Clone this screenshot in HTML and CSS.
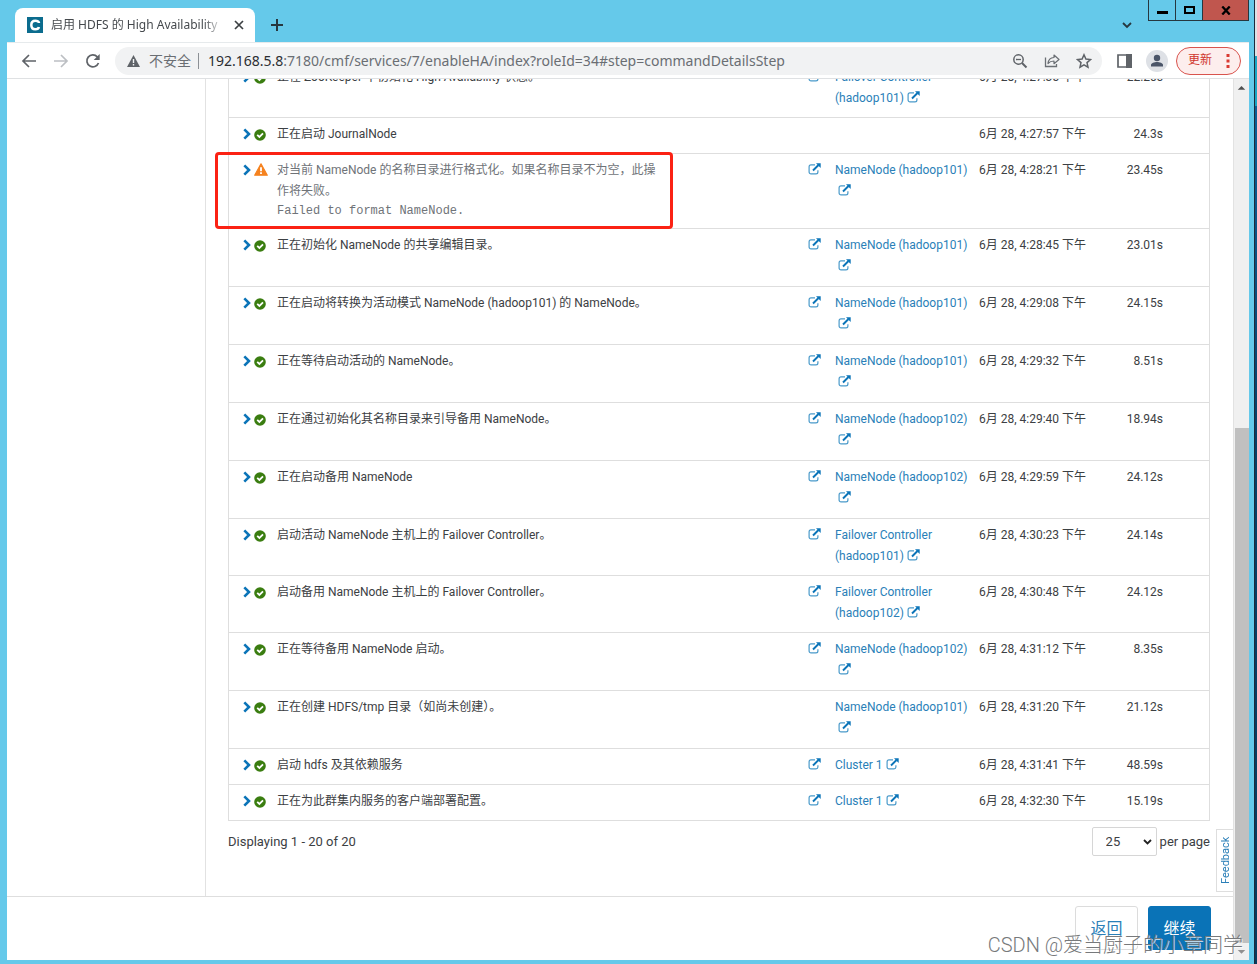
FILE: index.html
```html
<!DOCTYPE html>
<html lang="zh-CN">
<head>
<meta charset="utf-8">
<title>启用 HDFS 的 High Availability</title>
<link rel="stylesheet" href="styles.css">
</head>
<body>
<svg class="defs" aria-hidden="true">
  <symbol id="chev" viewBox="0 0 8 12"><path d="M1.3 1.3 6 6l-4.7 4.7" fill="none" stroke="#0b74b8" stroke-width="2.6"/></symbol>
  <symbol id="ok" viewBox="0 0 12 12"><circle cx="6" cy="6" r="5.8" fill="#3a7d10"/><path d="M3.2 5.9 5.4 8 9 4.4" fill="none" stroke="#fff" stroke-width="1.8"/></symbol>
  <symbol id="warn" viewBox="0 0 14 13"><path d="M7 .8 13.3 12.2H.7Z" fill="#f5821f" stroke="#f5821f" stroke-width="1.2" stroke-linejoin="round"/><path d="M7 4.2v4M7 9.3v1.8" stroke="#fff" stroke-width="1.8"/></symbol>
  <symbol id="ext" viewBox="0 0 13 12"><path d="M7 1.9H3A1.9 1.9 0 0 0 1.100 3.800V9A1.900 1.900 0 0 0 3 10.900H8A1.900 1.900 0 0 0 9.900 9V7.200" fill="none" stroke="#4a9aca" stroke-width="1.200"/><path d="M5 7.500 10.500 2" stroke="#0b74b8" stroke-width="1.900"/><path d="M8 .3h4.700V5Z" fill="#0b74b8"/></symbol>
</svg>
<div class="desktop">
<div class="window">
  <header class="tabbar">
    <div class="tab">
      <svg class="favicon" viewBox="0 0 16 16"><path fill="#0b6c8e" d="M0 0h16v16H0z"/><path d="M11.900 6.100V5.500C11.500 4.200 10 3.700 8.300 3.700 5.700 3.700 4.300 5.300 4.300 8s1.400 4.300 4 4.300c1.900 0 3.300-.7 3.600-2.300" fill="none" stroke="#fff" stroke-width="2.500"/></svg>
      <span class="tab-title">启用 HDFS 的 High Availability</span>
      <button class="plain" aria-label="关闭标签页"><svg width="10" height="10" viewBox="0 0 10 10"><path d="m1 1 8 8M9 1 1 9" stroke="#3c4043" stroke-width="1.700"/></svg></button>
    </div>
    <button class="plain newtab" aria-label="新标签页"><svg width="12" height="12" viewBox="0 0 12 12"><path d="M6 0v12M0 6h12" stroke="#26373f" stroke-width="2"/></svg></button>
    <button class="plain tabsearch" aria-label="搜索标签页"><svg width="10" height="7" viewBox="0 0 10 7"><path d="m1 1 4 4 4-4" fill="none" stroke="#26373f" stroke-width="1.800"/></svg></button>
    <div class="winctl">
      <button aria-label="最小化"><svg width="11" height="9" viewBox="0 0 11 9"><path d="M0 5h11v3H0z"/></svg></button>
      <button aria-label="最大化"><svg width="11" height="9" viewBox="0 0 11 9"><path d="M1 1h9v6H1z" fill="none" stroke="#000" stroke-width="2"/></svg></button>
      <button class="close" aria-label="关闭"><svg width="10" height="9" viewBox="0 0 10 9"><path d="m1.300 .5 7.400 8M8.700 .5l-7.400 8" stroke="#000" stroke-width="2.300"/></svg></button>
    </div>
  </header>
  <nav class="toolbar">
    <button class="plain" aria-label="后退"><svg width="16" height="16" viewBox="0 0 16 16"><path d="M15 8H2.500M8 2 2 8l6 6" fill="none" stroke="#5f6368" stroke-width="1.700"/></svg></button>
    <button class="plain" aria-label="前进"><svg width="16" height="16" viewBox="0 0 16 16"><path d="M1 8h12.500M8 2l6 6-6 6" fill="none" stroke="#bcbfc3" stroke-width="1.700"/></svg></button>
    <button class="plain" aria-label="重新加载"><svg width="16" height="16" viewBox="0 0 16 16"><path d="M13.500 10A6 6 0 1 1 12.300 3.800L13.500 5" fill="none" stroke="#5f6368" stroke-width="1.700"/><path d="M14.700 1v6h-6Z" fill="#5f6368"/></svg></button>
    <div class="address">
      <svg width="13" height="12" viewBox="0 0 13 12"><path d="M6.500 0 13 12H0Z" fill="#5f6368"/><path d="M6.500 4v4M6.500 9v1.500" stroke="#f1f3f4" stroke-width="1.400"/></svg>
      <span class="insecure">不安全</span><span class="bar"></span>
      <span class="url"><b>192.168.5.8</b>:7180/cmf/services/7/enableHA/index?roleId=34#step=commandDetailsStep</span>
      <button class="plain" aria-label="缩放"><svg width="16" height="16" viewBox="0 0 16 16"><circle cx="6.500" cy="6.500" r="4.700" fill="none" stroke="#5f6368" stroke-width="1.500"/><path d="M4 6.500h5" stroke="#5f6368" stroke-width="1.300"/><path d="m10 10 4.500 4.500" stroke="#5f6368" stroke-width="2"/></svg></button>
      <button class="plain" aria-label="分享"><svg width="16" height="16" viewBox="0 0 16 16"><path d="M1.500 4.500v9h11V11" fill="none" stroke="#6b6f74" stroke-width="1.300"/><path d="M4 10.500C4.300 7 6 4.700 10 4.500V2l5 4.500-5 4.200V8C7.500 8 5.500 8.700 4 10.500Z" fill="none" stroke="#6b6f74" stroke-width="1.200" stroke-linejoin="round"/></svg></button>
      <button class="plain" aria-label="收藏"><svg width="16" height="16" viewBox="0 0 16 16"><path d="m8 1.800 1.900 4.300 4.600.4-3.500 3.100 1 4.600L8 11.800l-4 2.400 1-4.600L1.500 6.500l4.600-.4Z" fill="none" stroke="#5f6368" stroke-width="1.500"/></svg></button>
    </div>
    <button class="plain panel" aria-label="侧边栏"><svg width="15" height="14" viewBox="0 0 15 14"><path d="M1 1h13v12H1z" fill="none" stroke="#5f6368" stroke-width="1.700"/><path d="M9 0h6v14H9z" fill="#5f6368"/></svg></button>
    <button class="plain" aria-label="用户"><svg width="22" height="22" viewBox="0 0 22 22"><circle cx="11" cy="11" r="11" fill="#dee1e6"/><circle cx="11" cy="8" r="3.200" fill="#4a5568"/><path d="M5 16.500V15c0-2 3.500-3 6-3s6 1 6 3v1.500Z" fill="#4a5568"/></svg></button>
    <button class="update">更新<svg width="4" height="14" viewBox="0 0 4 14"><path d="M.5 0h3v3h-3zM.5 5.500h3v3h-3zM.5 11h3v3h-3z" fill="#d93a32"/></svg></button>
  </nav>
  <div class="page">
    <div class="app">
      <div class="main">
        <aside class="sidebar"></aside>
        <main class="content">
          <table class="steps">
            <colgroup><col class="c-state"><col><col class="c-ext"><col class="c-ctx"><col class="c-time"><col class="c-dur"></colgroup>
            <tbody>
            <tr><td><svg class="chev"><use href="#chev"/></svg><svg class="ok"><use href="#ok"/></svg></td><td>正在 ZooKeeper 中初始化 High Availability 状态。</td><td><a href="#"><svg class="ext"><use href="#ext"/></svg></a></td><td><a href="#">Failover Controller (hadoop101)<svg class="ext after"><use href="#ext"/></svg></a></td><td>6月 28, 4:27:35 下午</td><td>22.20s</td></tr>
            <tr><td><svg class="chev"><use href="#chev"/></svg><svg class="ok"><use href="#ok"/></svg></td><td>正在启动 JournalNode</td><td></td><td></td><td>6月 28, 4:27:57 下午</td><td>24.3s</td></tr>
            <tr class="failed"><td><div class="callout"></div><svg class="chev"><use href="#chev"/></svg><svg class="warn"><use href="#warn"/></svg></td><td><div class="message">对当前 NameNode 的名称目录进行格式化。如果名称目录不为空，此操作将失败。</div><div class="error">Failed to format NameNode.</div></td><td><a href="#"><svg class="ext"><use href="#ext"/></svg></a></td><td><a href="#">NameNode (hadoop101)<svg class="ext after"><use href="#ext"/></svg></a></td><td>6月 28, 4:28:21 下午</td><td>23.45s</td></tr>
            <tr class="node"><td><svg class="chev"><use href="#chev"/></svg><svg class="ok"><use href="#ok"/></svg></td><td>正在初始化 NameNode 的共享编辑目录。</td><td><a href="#"><svg class="ext"><use href="#ext"/></svg></a></td><td><a href="#">NameNode (hadoop101)<svg class="ext after"><use href="#ext"/></svg></a></td><td>6月 28, 4:28:45 下午</td><td>23.01s</td></tr>
            <tr class="node"><td><svg class="chev"><use href="#chev"/></svg><svg class="ok"><use href="#ok"/></svg></td><td>正在启动将转换为活动模式 NameNode (hadoop101) 的 NameNode。</td><td><a href="#"><svg class="ext"><use href="#ext"/></svg></a></td><td><a href="#">NameNode (hadoop101)<svg class="ext after"><use href="#ext"/></svg></a></td><td>6月 28, 4:29:08 下午</td><td>24.15s</td></tr>
            <tr class="node"><td><svg class="chev"><use href="#chev"/></svg><svg class="ok"><use href="#ok"/></svg></td><td>正在等待启动活动的 NameNode。</td><td><a href="#"><svg class="ext"><use href="#ext"/></svg></a></td><td><a href="#">NameNode (hadoop101)<svg class="ext after"><use href="#ext"/></svg></a></td><td>6月 28, 4:29:32 下午</td><td>8.51s</td></tr>
            <tr class="node"><td><svg class="chev"><use href="#chev"/></svg><svg class="ok"><use href="#ok"/></svg></td><td>正在通过初始化其名称目录来引导备用 NameNode。</td><td><a href="#"><svg class="ext"><use href="#ext"/></svg></a></td><td><a href="#">NameNode (hadoop102)<svg class="ext after"><use href="#ext"/></svg></a></td><td>6月 28, 4:29:40 下午</td><td>18.94s</td></tr>
            <tr class="node"><td><svg class="chev"><use href="#chev"/></svg><svg class="ok"><use href="#ok"/></svg></td><td>正在启动备用 NameNode</td><td><a href="#"><svg class="ext"><use href="#ext"/></svg></a></td><td><a href="#">NameNode (hadoop102)<svg class="ext after"><use href="#ext"/></svg></a></td><td>6月 28, 4:29:59 下午</td><td>24.12s</td></tr>
            <tr><td><svg class="chev"><use href="#chev"/></svg><svg class="ok"><use href="#ok"/></svg></td><td>启动活动 NameNode 主机上的 Failover Controller。</td><td><a href="#"><svg class="ext"><use href="#ext"/></svg></a></td><td><a href="#">Failover Controller (hadoop101)<svg class="ext after"><use href="#ext"/></svg></a></td><td>6月 28, 4:30:23 下午</td><td>24.14s</td></tr>
            <tr><td><svg class="chev"><use href="#chev"/></svg><svg class="ok"><use href="#ok"/></svg></td><td>启动备用 NameNode 主机上的 Failover Controller。</td><td><a href="#"><svg class="ext"><use href="#ext"/></svg></a></td><td><a href="#">Failover Controller (hadoop102)<svg class="ext after"><use href="#ext"/></svg></a></td><td>6月 28, 4:30:48 下午</td><td>24.12s</td></tr>
            <tr class="node"><td><svg class="chev"><use href="#chev"/></svg><svg class="ok"><use href="#ok"/></svg></td><td>正在等待备用 NameNode 启动。</td><td><a href="#"><svg class="ext"><use href="#ext"/></svg></a></td><td><a href="#">NameNode (hadoop102)<svg class="ext after"><use href="#ext"/></svg></a></td><td>6月 28, 4:31:12 下午</td><td>8.35s</td></tr>
            <tr class="node"><td><svg class="chev"><use href="#chev"/></svg><svg class="ok"><use href="#ok"/></svg></td><td>正在创建 HDFS/tmp 目录（如尚未创建）。</td><td></td><td><a href="#">NameNode (hadoop101)<svg class="ext after"><use href="#ext"/></svg></a></td><td>6月 28, 4:31:20 下午</td><td>21.12s</td></tr>
            <tr><td><svg class="chev"><use href="#chev"/></svg><svg class="ok"><use href="#ok"/></svg></td><td>启动 hdfs 及其依赖服务</td><td><a href="#"><svg class="ext"><use href="#ext"/></svg></a></td><td><a href="#">Cluster 1<svg class="ext after"><use href="#ext"/></svg></a></td><td>6月 28, 4:31:41 下午</td><td>48.59s</td></tr>
            <tr><td><svg class="chev"><use href="#chev"/></svg><svg class="ok"><use href="#ok"/></svg></td><td>正在为此群集内服务的客户端部署配置。</td><td><a href="#"><svg class="ext"><use href="#ext"/></svg></a></td><td><a href="#">Cluster 1<svg class="ext after"><use href="#ext"/></svg></a></td><td>6月 28, 4:32:30 下午</td><td>15.19s</td></tr>
            </tbody>
          </table>
          <div class="pager">
            <span>Displaying 1 - 20 of 20</span>
            <label><span class="select"><select><option>25</option><option>50</option></select><svg width="9" height="6" viewBox="0 0 9 6"><path d="m1 1 3.500 3.500L8 1" fill="none" stroke="#222" stroke-width="1.800"/></svg></span>per page</label>
          </div>
        </main>
        <a class="feedback" href="#">Feedback</a>
      </div>
      <footer class="actions">
        <button class="btn">返回</button>
        <button class="btn primary">继续</button>
      </footer>
    </div>
    <div class="scrollbar">
      <svg viewBox="0 0 16 17"><path d="m4 11 4-4 4 4Z" fill="#505050"/></svg>
      <div class="space"></div><div class="thumb"></div>
      <svg viewBox="0 0 16 17"><path d="m4 7 4 4 4-4Z" fill="#909090"/></svg>
    </div>
  </div>
</div>
<div class="behind"></div>
<div class="watermark">CSDN @爱当厨子的小章同学</div>
</div>
</body>
</html>
```
FILE: styles.css
```css
* { box-sizing: border-box; }
body { margin: 0; font: 12px/21px Roboto, "Noto Sans CJK SC", sans-serif; color: #3c4043; }
a { color: #2a7fb8; text-decoration: none; }
button { font: inherit; cursor: pointer; }
.defs { position: absolute; width: 0; height: 0; }
.plain { border: 0; padding: 0; background: none; display: flex; align-items: center; justify-content: center; }
.desktop { position: relative; display: flex; height: 100vh; overflow: hidden; }
.window { flex: 1; min-width: 0; display: flex; flex-direction: column; background: #65c9ea; padding: 0 5px 4px 7px; }
.behind { width: 3px; border-left: 1px solid #1c2a3c; background: linear-gradient(#dde3e6 56px, #1ba5c4 56px 106px, #0b5f96 106px, #063f66 45%, #073a5c); }

/* Browser chrome */
.tabbar { display: flex; height: 42px; padding-left: 8px; font: 12px/20px "Noto Sans", "Noto Sans CJK SC", sans-serif; }
.tab { display: flex; align-items: center; width: 240px; height: 34px; margin-top: 8px; padding: 0 11px 0 12px; background: #fff; border-radius: 8px 8px 0 0; }
.favicon { width: 16px; height: 16px; flex: none; }
.tab-title { flex: 1; margin: 0 10px 0 8px; overflow: hidden; white-space: nowrap; color: #45494d; -webkit-mask-image: linear-gradient(90deg, #000 88%, transparent); mask-image: linear-gradient(90deg, #000 88%, transparent); }
.newtab { margin: 8px 0 0 16px; }
.tabsearch { margin: 9px 16px 0 auto; }
.winctl { display: flex; height: 21px; border: 1px solid #26373f; border-top: 0; }
.winctl button { width: 27px; border: 0; border-right: 1px solid #26373f; background: none; padding: 0; display: flex; align-items: center; justify-content: center; }
.winctl .close { width: 45px; border-right: 0; background: #c0564e; }
.toolbar { display: flex; align-items: center; gap: 16px; height: 37px; padding: 0 8px 0 14px; background: #fff; border-top: 1px solid #e6eaec; border-bottom: 1px solid #dfe1e3; }
.address { flex: 1; min-width: 0; display: flex; align-items: center; height: 28px; margin-left: -2px; margin-right: -1px; padding: 0 10px 0 12px; border-radius: 14px; background: #f1f2f3; color: #6a6e73; font: 14px/20px "Noto Sans", "Noto Sans CJK SC", sans-serif; }
.insecure { margin: 0 7px 0 9px; white-space: nowrap; }
.bar { width: 1px; height: 16px; background: #8c9095; margin-right: 9px; }
.url { flex: 1; min-width: 0; overflow: hidden; white-space: nowrap; }
.url b { font-weight: 400; color: #2b2e32; }
.address .plain { margin-left: 16px; }
.address .url + .plain { margin-left: 8px; }
.panel { margin-right: -2px; }
.update { display: flex; align-items: center; gap: 14px; margin-left: -8px; height: 28px; padding: 0 10px 0 11px; border: 1px solid #d9534d; border-radius: 14px; background: #fdeeed; color: #d0362e; }

/* Page */
.page { flex: 1; min-height: 0; display: flex; background: #fff; }
.app { flex: 1; min-width: 0; display: flex; flex-direction: column; }
.main { position: relative; flex: 1; min-height: 0; display: flex; }
.sidebar { width: 199px; border-right: 1px solid #e2e2e2; }
.content { flex: 1; min-width: 0; display: flex; flex-direction: column; justify-content: flex-end; overflow: hidden; padding: 0 23px 40px 22px; }
.steps { flex: none; width: 100%; table-layout: fixed; border-collapse: separate; border-spacing: 0; border: 1px solid #dedede; border-width: 0 1px; }
.steps td { padding: 6px 0 8px; border-bottom: 1px solid #dedede; vertical-align: top; }
.steps td:first-child { position: relative; padding-left: 14px; }
.steps td:nth-child(4) { padding-right: 10px; }
.steps td:last-child { padding-right: 46px; text-align: right; }
.steps .node { height: 58px; }
.c-state { width: 48px; }
.c-ext { width: 27px; }
.c-ctx { width: 144px; }
.c-time { width: 120px; }
.c-dur { width: 110px; }
.chev { width: 8px; height: 12px; margin-right: 3px; vertical-align: -2px; }
.ok { width: 12px; height: 12px; vertical-align: -3px; }
.warn { width: 14px; height: 13px; vertical-align: -2px; }
.ext { width: 13px; height: 12px; vertical-align: -1px; }
.after { margin-left: 3px; }
.failed { color: #6f7378; }
.failed td:nth-child(n+5) { color: #3c4043; }
.message { max-width: 384px; }
.error { font: 12px/18px "Liberation Mono", monospace; }
.callout { position: absolute; top: -2px; left: -14px; width: 458px; height: 77px; border: 3px solid #fb2214; border-radius: 4px; }
.pager { flex: none; display: flex; justify-content: space-between; align-items: center; margin-top: 6px; height: 30px; font-size: 13px; }
.content .pager { margin-top: 5px; }
.pager label { display: flex; align-items: center; gap: 3px; }
.select { position: relative; display: flex; }
.select select { appearance: none; width: 65px; height: 29px; padding: 0 13px; border: 1px solid #d6d6d6; border-radius: 2px; background: #fff; color: #3c4043; font: inherit; }
.select svg { position: absolute; right: 5px; top: 12px; pointer-events: none; }
.feedback { position: absolute; right: 0; bottom: 4px; height: 63px; width: 17px; padding-right: 2px; border: 1px solid #dedede; border-left: 0; background: #fff; writing-mode: vertical-rl; transform: rotate(180deg); text-align: center; font-size: 11px; line-height: 14px; }
.actions { display: flex; justify-content: flex-end; gap: 10px; height: 64px; padding: 9px 22px 10px; border-top: 1px solid #dedede; }
.btn { width: 63px; height: 44px; border: 1px solid #dcdcdc; border-radius: 3px; background: #fff; color: #2a7fb8; font-size: 16px; }
.primary { border-color: #0a73b7; background: #0a73b7; color: #fff; }
.scrollbar { display: flex; flex-direction: column; width: 16px; border-left: 1px solid #e2e2e2; background: #f0f0f0; }
.scrollbar svg { height: 17px; flex: none; }
.space { flex: 332; }
.thumb { flex: 515; margin-left: 1px; background: #c0c0c0; }
.watermark { position: absolute; right: 14px; bottom: 7px; font: 20px/24px Roboto, "Noto Sans CJK SC", sans-serif; font-weight: 300; color: #77797b; text-shadow: 1px 1px #fffb; white-space: nowrap; }
```
